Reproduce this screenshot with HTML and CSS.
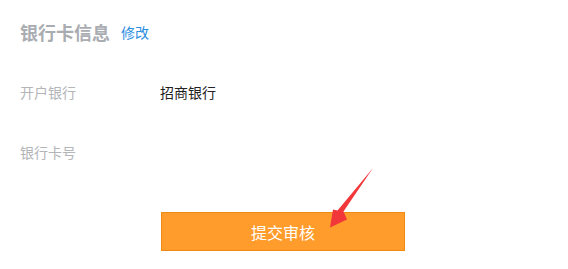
FILE: index.html
```html
<!DOCTYPE html>
<html lang="zh">
<head>
<meta charset="utf-8">
<link rel="stylesheet" href="styles.css">
</head>
<body>
<div class="page">
  <div class="title-row">
    <span class="title">银行卡信息</span>
    <a class="edit">修改</a>
  </div>
  <div class="rows">
    <div class="row">
      <span class="label">开户银行</span>
      <span class="value">招商银行</span>
    </div>
    <div class="row">
      <span class="label">银行卡号</span>
      <span class="value"></span>
    </div>
  </div>
  <div class="actions">
    <button class="submit">提交审核</button>
  </div>
  <svg class="arrow" width="568" height="269" viewBox="0 0 568 269">
    <polygon points="373,168 343.5,211.5 347,219.5 330,227.5 333,209.5 337.5,210.5" fill="#f2373b"/>
  </svg>
</div>
</body>
</html>
```
FILE: styles.css
```css
html, body {
  margin: 0;
  padding: 0;
  background: #fff;
}
body {
  font-family: "Noto Sans CJK SC", "Liberation Sans", sans-serif;
}
.page {
  position: relative;
  width: 568px;
  height: 269px;
  padding-left: 20px;
  box-sizing: border-box;
}
.title-row {
  display: flex;
  align-items: center;
  padding-top: 20px;
  height: 24px;
  gap: 11px;
}
.title {
  font-size: 18px;
  font-weight: bold;
  color: #a9acb1;
  line-height: 24px;
}
.edit {
  font-size: 14px;
  color: #2a8de0;
  line-height: 24px;
}
.rows {
  padding-top: 18px;
}
.row {
  display: flex;
  align-items: center;
  height: 60px;
}
.label {
  width: 140px;
  font-size: 14px;
  color: #b3b5b9;
}
.value {
  font-size: 14px;
  color: #222;
}
.actions {
  padding-left: 141px;
  padding-top: 30px;
}
.submit {
  width: 244px;
  height: 39px;
  background: #ff9c2b;
  border: 1px solid #ef8a12;
  color: #fff;
  font-family: "Noto Sans CJK SC", "Liberation Sans", sans-serif;
  font-size: 16px;
  padding: 0;
  display: block;
}
.arrow {
  position: absolute;
  left: 0;
  top: 0;
  pointer-events: none;
}
```
